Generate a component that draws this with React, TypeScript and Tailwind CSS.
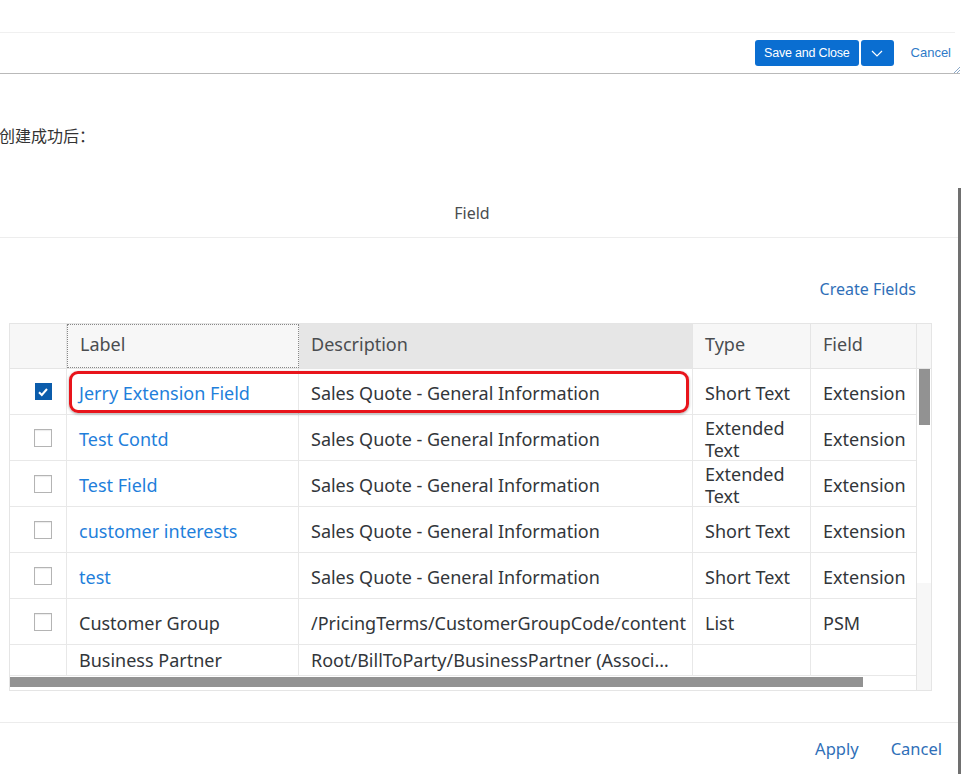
import React from 'react';

type Row = {
  checked?: boolean;
  noBox?: boolean;
  label: string;
  link: boolean;
  desc: string;
  type: string;
  field: string;
  short?: boolean;
};

const rows: Row[] = [
  { checked: true, label: 'Jerry Extension Field', link: true, desc: 'Sales Quote - General Information', type: 'Short Text', field: 'Extension' },
  { label: 'Test Contd', link: true, desc: 'Sales Quote - General Information', type: 'Extended Text', field: 'Extension' },
  { label: 'Test Field', link: true, desc: 'Sales Quote - General Information', type: 'Extended Text', field: 'Extension' },
  { label: 'customer interests', link: true, desc: 'Sales Quote - General Information', type: 'Short Text', field: 'Extension' },
  { label: 'test', link: true, desc: 'Sales Quote - General Information', type: 'Short Text', field: 'Extension' },
  { label: 'Customer Group', link: false, desc: '/PricingTerms/CustomerGroupCode/content', type: 'List', field: 'PSM' },
  { noBox: true, short: true, label: 'Business Partner', link: false, desc: 'Root/BillToParty/BusinessPartner (Associ…', type: '', field: '' },
];

function Checkbox({ checked }: { checked?: boolean }) {
  if (checked) {
    return (
      <div className="w-[17px] h-[17px] bg-[#0b5cab] flex items-center justify-center">
        <svg width="12" height="12" viewBox="0 0 12 12">
          <path d="M2 6.2 L4.8 9 L10 3" fill="none" stroke="white" strokeWidth="2" />
        </svg>
      </div>
    );
  }
  return <div className="w-[18px] h-[18px] bg-white border border-[#b4b4b4] shadow-[inset_0_1px_1px_rgba(0,0,0,0.08)]" />;
}

export default function App() {
  return (
    <div className="w-[967px] h-[774px] bg-white overflow-hidden relative font-['Noto_Sans','Noto_Sans_CJK_SC',sans-serif] text-[#32363a]">
      {/* top bar */}
      <div className="h-[33px] border-b border-[#f0f0f0] w-[955px]" />
      <div className="relative h-[41px] w-[960px] border-b border-[#b9b9b9] flex items-center justify-end pr-[9px]">
        <button className="h-[26px] px-[9px] bg-[#0a6ed1] text-white text-[12.5px] rounded-[3px] font-['Liberation_Sans',sans-serif] tracking-[-0.2px]">
          Save and Close
        </button>
        <button className="ml-[2px] h-[26px] w-[33px] bg-[#0a6ed1] rounded-[3px] flex items-center justify-center">
          <svg width="12" height="7" viewBox="0 0 12 7">
            <path d="M1 1 L6 6 L11 1" fill="none" stroke="white" strokeWidth="1.2" />
          </svg>
        </button>
        <span className="ml-[17px] text-[13px] text-[#2f7bc8] font-['Liberation_Sans',sans-serif]">Cancel</span>
        <svg className="absolute right-[0px] bottom-[0px]" width="7" height="7" viewBox="0 0 7 7">
          <path d="M1 7 L7 1 M4 7 L7 4" stroke="#8aa8c8" strokeWidth="1" />
        </svg>
      </div>

      <p className="mt-[51px] text-[16px] leading-[20px] text-[#333] font-['Noto_Sans_CJK_SC',sans-serif] -ml-[1px]">创建成功后：</p>

      {/* dialog */}
      <div className="mt-[43px] w-[961px] border-r-[3px] border-[#707070] h-[586px]">
        <div className="h-[50px] border-b border-[#ededed] flex items-center justify-center pr-[14px] text-[16px] text-[#4a4d50]">
          Field
        </div>

        <div className="pt-[39px] flex justify-end pr-[42px]">
          <span className="text-[16px] leading-[24px] text-[#2f6fb8]">Create Fields</span>
        </div>

        {/* table */}
        <div className="relative mt-[22px] ml-[9px] w-[923px] h-[368px] border border-[#e5e5e5] bg-white flex overflow-hidden text-[18px]">
          <div className="w-[906px] flex flex-col">
            {/* header */}
            <div className="h-[45px] flex border-b border-[#e5e5e5] text-[#4a4d50]">
              <div className="w-[57px] bg-[#f7f7f7] border-r border-[#e5e5e5]" />
              <div className="w-[232px] bg-[#f7f7f7] border border-dotted border-[#888] flex items-center pl-[12px] pb-[3px]">Label</div>
              <div className="w-[394px] bg-[#e6e6e6] border-r border-[#e5e5e5] flex items-center pl-[12px] pb-[3px]">Description</div>
              <div className="w-[118px] bg-[#f7f7f7] border-r border-[#e5e5e5] flex items-center pl-[12px] pb-[3px]">Type</div>
              <div className="w-[105px] bg-[#f7f7f7] flex items-center pl-[12px] pb-[3px]">Field</div>
            </div>
            {/* body */}
            <div className="flex-1 overflow-hidden">
              {rows.map((r) => (
                <div
                  key={r.label}
                  className={`flex border-b border-[#e8e8e8] ${r.short ? 'h-[31px]' : 'h-[46px]'}`}
                >
                  <div className="w-[57px] border-r border-[#e8e8e8] flex justify-center pt-[14px] pl-[10px]">
                    {!r.noBox && <Checkbox checked={r.checked} />}
                  </div>
                  <div
                    className={`w-[232px] border-r border-[#e8e8e8] flex items-center pl-[12px] whitespace-nowrap ${
                      r.short ? '' : 'pt-[3px]'
                    } ${r.link ? 'text-[#1f7fdb]' : 'text-[#32363a]'}`}
                  >
                    {r.label}
                  </div>
                  <div
                    className={`w-[394px] border-r border-[#e8e8e8] flex items-center pl-[12px] whitespace-nowrap overflow-hidden ${
                      r.short ? '' : 'pt-[3px]'
                    }`}
                  >
                    {r.desc}
                  </div>
                  <div className="w-[118px] border-r border-[#e8e8e8] flex items-center pl-[12px] pr-[10px] leading-[22px] pt-[2px]">
                    {r.type}
                  </div>
                  <div className={`w-[105px] flex items-center pl-[12px] ${r.short ? '' : 'pt-[3px]'}`}>{r.field}</div>
                </div>
              ))}
            </div>
            <div className="h-[14px] pt-[1px]">
              <div className="h-[10px] w-[853px] bg-[#929292]" />
            </div>
          </div>
          {/* vertical scrollbar */}
          <div className="w-[17px] flex flex-col border-l border-[#e5e5e5]">
            <div className="h-[45px] bg-[#f7f7f7] border-b border-[#e5e5e5]" />
            <div className="h-[214px] pl-[2px]">
              <div className="w-[11px] h-[56px] bg-[#929292]" />
            </div>
            <div className="flex-1 bg-[#f7f7f7]" />
          </div>

          {/* highlight */}
          <div className="absolute left-[59px] top-[47px] w-[620px] h-[42px] border-[3px] border-[#e8141b] rounded-[9px] shadow-[0_1px_3px_rgba(0,0,0,0.35)]" />
        </div>

        {/* footer */}
        <div className="mt-[31px] border-t border-[#ececec] h-[53px] flex items-center justify-end pr-[16px] text-[16.5px] text-[#2f6fb8]">
          <span>Apply</span>
          <span className="ml-[32px]">Cancel</span>
        </div>
      </div>
    </div>
  );
}
